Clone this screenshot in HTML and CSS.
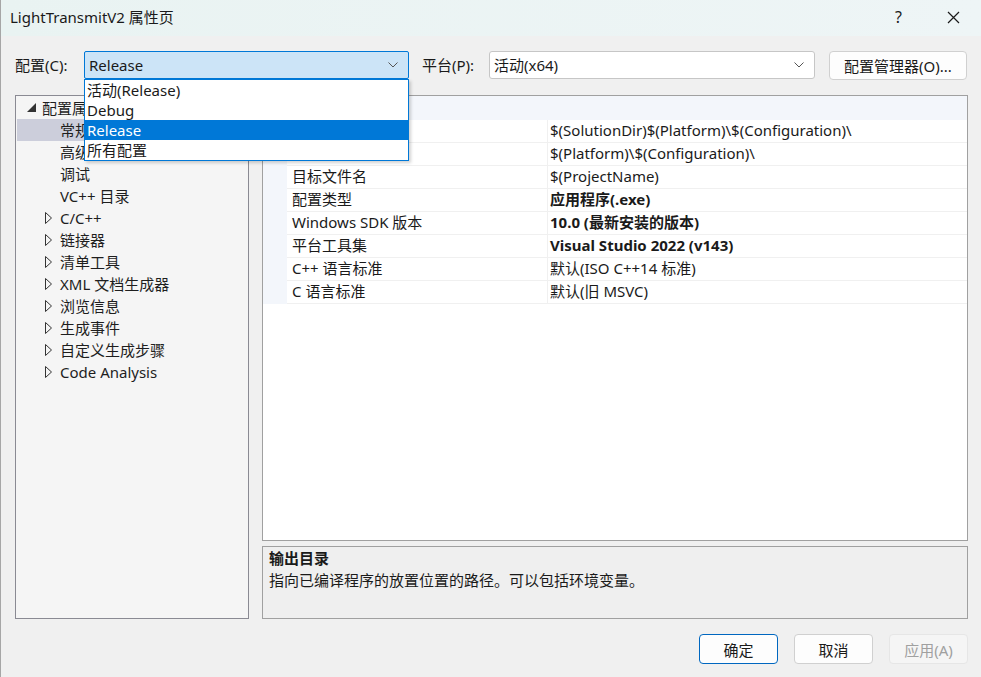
FILE: index.html
```html
<!DOCTYPE html>
<html lang="zh-CN">
<head>
    <meta charset="UTF-8">
    <title>LightTransmitV2 属性页</title>
    <link rel="stylesheet" href="styles.css">
</head>
<body>
<div class="window">
    <div class="titlebar">
        <span class="title">LightTransmitV2 属性页</span>
        <span class="help">?</span>
        <span class="close">
            <svg width="13" height="13" viewBox="0 0 13 13"><path d="M1 1L12 12M12 1L1 12" stroke="#1a1a1a" stroke-width="1.2" fill="none"/></svg>
        </span>
    </div>

    <div class="content">
        <div class="toolbar">
            <label class="field-label label-config">配置(C):</label>
            <div class="combo combo-open">
                <span class="combo-text">Release</span>
                <svg class="chevron" width="10" height="6" viewBox="0 0 10 6"><polyline points="0.5,0.5 5,5 9.5,0.5" stroke="#555" fill="none"/></svg>
                <ul class="dropdown">
                    <li>活动(Release)</li>
                    <li>Debug</li>
                    <li class="selected">Release</li>
                    <li>所有配置</li>
                </ul>
            </div>
            <label class="field-label label-platform">平台(P):</label>
            <div class="combo">
                <span class="combo-text">活动(x64)</span>
                <svg class="chevron" width="10" height="6" viewBox="0 0 10 6"><polyline points="0.5,0.5 5,5 9.5,0.5" stroke="#555" fill="none"/></svg>
            </div>
            <button class="btn btn-manager">配置管理器(O)...</button>
        </div>

        <div class="main">
            <div class="tree">
                <div class="tree-row level-0">
                    <span class="toggle"><svg width="9" height="9" viewBox="0 0 9 9"><polygon points="9,0 9,9 0,9" fill="#333"/></svg></span>
                    <span>配置属性</span>
                </div>
                <div class="tree-row level-1 active"><span class="toggle"></span><span>常规</span></div>
                <div class="tree-row level-1"><span class="toggle"></span><span>高级</span></div>
                <div class="tree-row level-1"><span class="toggle"></span><span>调试</span></div>
                <div class="tree-row level-1"><span class="toggle"></span><span>VC++ 目录</span></div>
                <div class="tree-row level-1"><span class="toggle"><svg width="8" height="12" viewBox="0 0 8 12"><polygon points="0.5,0.5 6.5,6 0.5,11.5" stroke="#333" fill="none"/></svg></span><span>C/C++</span></div>
                <div class="tree-row level-1"><span class="toggle"><svg width="8" height="12" viewBox="0 0 8 12"><polygon points="0.5,0.5 6.5,6 0.5,11.5" stroke="#333" fill="none"/></svg></span><span>链接器</span></div>
                <div class="tree-row level-1"><span class="toggle"><svg width="8" height="12" viewBox="0 0 8 12"><polygon points="0.5,0.5 6.5,6 0.5,11.5" stroke="#333" fill="none"/></svg></span><span>清单工具</span></div>
                <div class="tree-row level-1"><span class="toggle"><svg width="8" height="12" viewBox="0 0 8 12"><polygon points="0.5,0.5 6.5,6 0.5,11.5" stroke="#333" fill="none"/></svg></span><span>XML 文档生成器</span></div>
                <div class="tree-row level-1"><span class="toggle"><svg width="8" height="12" viewBox="0 0 8 12"><polygon points="0.5,0.5 6.5,6 0.5,11.5" stroke="#333" fill="none"/></svg></span><span>浏览信息</span></div>
                <div class="tree-row level-1"><span class="toggle"><svg width="8" height="12" viewBox="0 0 8 12"><polygon points="0.5,0.5 6.5,6 0.5,11.5" stroke="#333" fill="none"/></svg></span><span>生成事件</span></div>
                <div class="tree-row level-1"><span class="toggle"><svg width="8" height="12" viewBox="0 0 8 12"><polygon points="0.5,0.5 6.5,6 0.5,11.5" stroke="#333" fill="none"/></svg></span><span>自定义生成步骤</span></div>
                <div class="tree-row level-1"><span class="toggle"><svg width="8" height="12" viewBox="0 0 8 12"><polygon points="0.5,0.5 6.5,6 0.5,11.5" stroke="#333" fill="none"/></svg></span><span>Code Analysis</span></div>
            </div>

            <div class="right-pane">
                <div class="grid">
                    <div class="grid-header">常规</div>
                    <div class="grid-row selected"><div class="cell-name">输出目录</div><div class="cell-value">$(SolutionDir)$(Platform)\$(Configuration)\</div></div>
                    <div class="grid-row"><div class="cell-name">中间目录</div><div class="cell-value">$(Platform)\$(Configuration)\</div></div>
                    <div class="grid-row"><div class="cell-name">目标文件名</div><div class="cell-value">$(ProjectName)</div></div>
                    <div class="grid-row"><div class="cell-name">配置类型</div><div class="cell-value bold">应用程序(.exe)</div></div>
                    <div class="grid-row"><div class="cell-name">Windows SDK 版本</div><div class="cell-value bold">10.0 (最新安装的版本)</div></div>
                    <div class="grid-row"><div class="cell-name">平台工具集</div><div class="cell-value bold">Visual Studio 2022 (v143)</div></div>
                    <div class="grid-row"><div class="cell-name">C++ 语言标准</div><div class="cell-value">默认(ISO C++14 标准)</div></div>
                    <div class="grid-row"><div class="cell-name">C 语言标准</div><div class="cell-value">默认(旧 MSVC)</div></div>
                </div>
                <div class="description">
                    <div class="desc-title">输出目录</div>
                    <div class="desc-text">指向已编译程序的放置位置的路径。可以包括环境变量。</div>
                </div>
            </div>
        </div>

        <div class="footer">
            <button class="btn btn-primary">确定</button>
            <button class="btn">取消</button>
            <button class="btn btn-disabled">应用(A)</button>
        </div>
    </div>
</div>
</body>
</html>
```

FILE: styles.css
```css
* {
    margin: 0;
    padding: 0;
    box-sizing: border-box;
}

body {
    background: #f0f0f0;
    font-family: 'Noto Sans', 'Noto Sans CJK SC', sans-serif;
    font-size: 15px;
    color: #1a1a1a;
    overflow: hidden;
}

.window {
    width: 981px;
    height: 677px;
    border-left: 1px solid #a6a6a6;
    background: #f0f0f0;
}

/* title bar */
.titlebar {
    height: 36px;
    display: flex;
    align-items: center;
    background: linear-gradient(90deg, #e9f3f2, #eef5f6);
    padding-left: 9px;
}

.title {
    flex-grow: 1;
    font-size: 15px;
    line-height: 20px;
    margin-top: -2px;
}

.help {
    width: 52px;
    font-size: 16px;
    margin-top: -2px;
}

.close {
    width: 34px;
    display: flex;
    margin-top: -2px;
}

.content {
    padding: 15px 13px 0 14px;
}

/* toolbar */
.toolbar {
    display: flex;
    align-items: center;
    height: 28px;
    margin-bottom: 16px;
}

.field-label {
    line-height: 20px;
}

.label-config {
    width: 69px;
}

.label-platform {
    width: 67px;
    margin-left: 13px;
}

.combo {
    position: relative;
    width: 326px;
    height: 28px;
    border: 1px solid #c6c6c6;
    border-radius: 3px;
    background: #fff;
    display: flex;
    align-items: center;
    padding: 0 10px 0 4px;
}

.combo-open {
    width: 325px;
    background: #cce4f7;
    border-color: #0078d7;
    border-radius: 2px;
}

.combo-text {
    flex-grow: 1;
    line-height: 20px;
}

.dropdown {
    position: absolute;
    top: 27px;
    left: -1px;
    width: 325px;
    list-style: none;
    background: #fff;
    border: 1px solid #0078d7;
    box-shadow: 2px 2px 3px rgba(0, 0, 0, 0.18);
    z-index: 10;
}

.dropdown li {
    height: 20px;
    line-height: 20px;
    padding-left: 2px;
}

.dropdown li.selected {
    background: #0078d7;
    color: #fff;
}

.btn {
    font-family: inherit;
    font-size: 15px;
    color: #1a1a1a;
    background: #fdfdfd;
    border: 1px solid #d0d0d0;
    border-radius: 4px;
    height: 30px;
    width: 79px;
}

.btn-manager {
    width: 138px;
    height: 29px;
    margin-left: 14px;
}

/* main area */
.main {
    display: flex;
    gap: 13px;
    height: 524px;
}

.tree {
    width: 234px;
    border: 1px solid #8a8a93;
    background: #f5f5f5;
    padding: 1px 1px 0;
}

.tree-row {
    display: flex;
    align-items: center;
    height: 22px;
    line-height: 22px;
    color: #1e1e1e;
}

.tree-row.level-0 {
    padding-left: 10px;
}

.tree-row.level-1 {
    padding-left: 28px;
}

.tree-row.active {
    background: #cccedb;
}

.toggle {
    width: 15px;
    display: flex;
    align-items: center;
}

.level-0 .toggle svg {
    margin-top: -2px;
}

.right-pane {
    flex-grow: 1;
    display: flex;
    flex-direction: column;
    gap: 5px;
}

.grid {
    height: 446px;
    border: 1px solid #a0a0a0;
    background: #fff;
}

.grid-header {
    height: 24px;
    line-height: 24px;
    padding-left: 6px;
    background: #f3f6fb;
    font-weight: bold;
}

.grid-row {
    display: flex;
    height: 23px;
    line-height: 21px;
    border-left: 24px solid #f3f6fb;
}

.cell-name {
    width: 261px;
    padding-left: 5px;
    border-bottom: 1px solid #f0f0f0;
    border-right: 1px solid #f0f0f0;
}

.cell-value {
    flex-grow: 1;
    padding-left: 2px;
    border-bottom: 1px solid #f0f0f0;
}

.cell-value.bold {
    font-weight: bold;
}

.description {
    flex-grow: 1;
    border: 1px solid #a0a0a0;
    background: #efefef;
    padding: 0 6px;
}

.desc-title {
    font-weight: bold;
    line-height: 22px;
}

.desc-text {
    line-height: 22px;
}

/* buttons */
.footer {
    display: flex;
    justify-content: flex-end;
    gap: 16px;
    padding-top: 15px;
}

.btn-primary {
    border-color: #0067c0;
    background: #fdfdfd;
}

.btn-disabled {
    color: #a0a0a0;
    background: #f5f5f5;
    border-color: #e6e6e6;
}
```
